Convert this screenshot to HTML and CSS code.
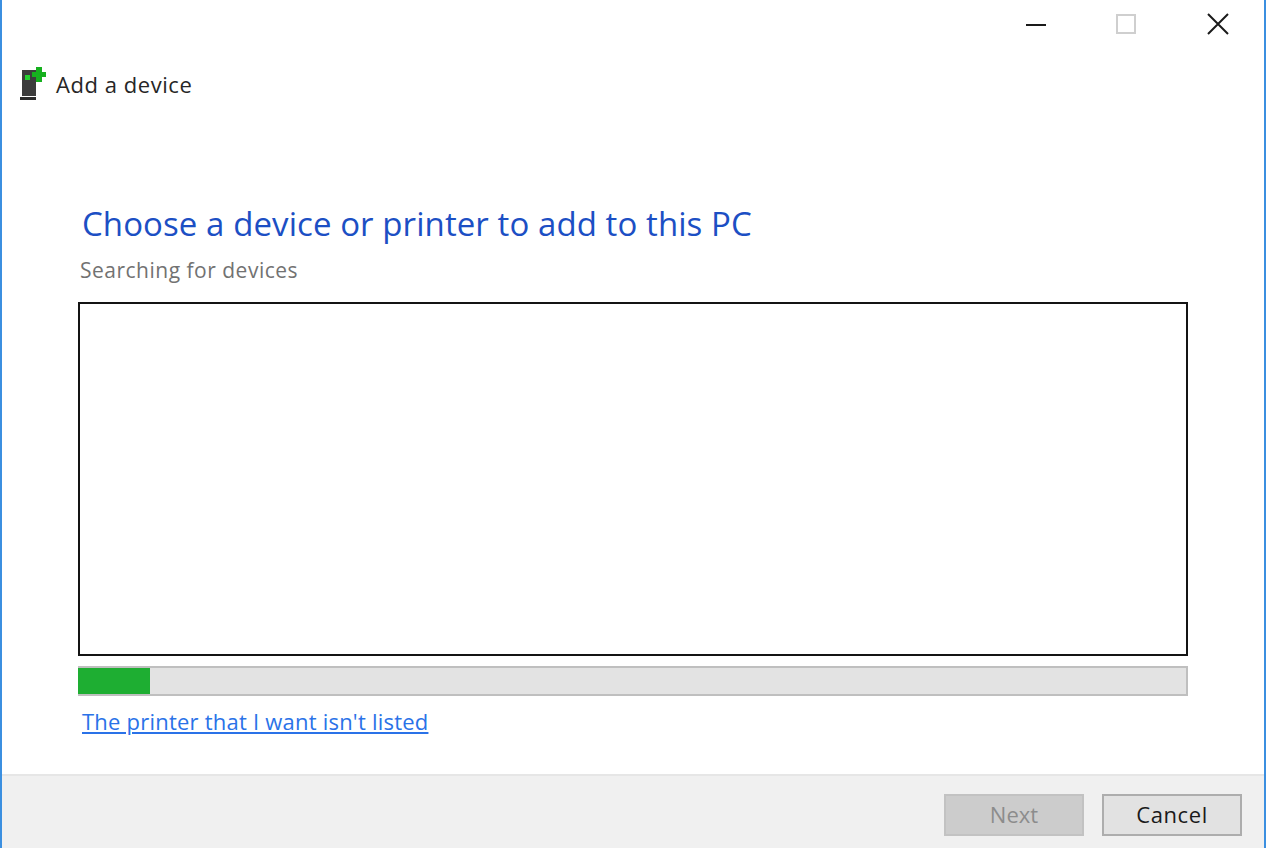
FILE: index.html
```html
<!DOCTYPE html>
<html lang="en">
<head>
<meta charset="utf-8">
<title>Add a device</title>
<link rel="stylesheet" href="styles.css">
</head>
<body>
<div class="window">
  <div class="controls">
    <svg class="ctl" width="22" height="22" viewBox="0 0 22 22"><path d="M1 12h20" stroke="#1a1a1a" stroke-width="2" fill="none"/></svg>
    <svg class="ctl" width="22" height="22" viewBox="0 0 22 22"><rect x="1" y="2" width="18" height="18" stroke="#cfcfcf" stroke-width="2" fill="none"/></svg>
    <svg class="ctl" width="22" height="22" viewBox="0 0 22 22"><path d="M1 1l20 20M21 1L1 21" stroke="#1a1a1a" stroke-width="2" fill="none"/></svg>
  </div>
  <div class="apphead">
    <svg class="appicon" width="28" height="34" viewBox="0 0 28 34">
      <rect x="4" y="3" width="14" height="26" fill="#3c3c3c"/>
      <rect x="7" y="8" width="5" height="5" fill="#25d030"/>
      <rect x="2" y="30" width="16" height="3" fill="#2c2c2c"/>
      <path d="M18 0h6v5h4v5h-4v5h-6v-5h-4V5h4z" fill="#16b01e"/>
    </svg>
    <span class="apptitle">Add a device</span>
  </div>
  <main class="content">
    <h1 class="heading">Choose a device or printer to add to this PC</h1>
    <p class="status">Searching for devices</p>
    <div class="listbox"></div>
    <div class="progress"><div class="bar"></div></div>
    <a class="link" href="#">The printer that I want isn't listed</a>
  </main>
  <footer class="footer">
    <button class="btn btn-off" disabled>Next</button>
    <button class="btn">Cancel</button>
  </footer>
</div>
</body>
</html>
```

FILE: styles.css
```css
* { box-sizing: border-box; }
html, body { margin: 0; height: 100%; overflow: hidden; }
body { background: #fff; font-family: "Open Sans", "Noto Sans", sans-serif; }
.window {
  width: 1266px;
  height: 848px;
  display: flex;
  flex-direction: column;
  border-left: 2px solid #3b8fe0;
  border-right: 2px solid #3b8fe0;
  background: #fff;
}
.controls {
  display: flex;
  justify-content: flex-end;
  gap: 69px;
  padding: 13px 35px 0 0;
  height: 66px;
}
.ctl { display: block; }
.apphead {
  display: flex;
  align-items: center;
  gap: 10px;
  padding-left: 16px;
  height: 36px;
}
.apptitle { font-size: 22px; color: #262626; letter-spacing: 0.55px; }
.content {
  flex: 1;
  display: flex;
  flex-direction: column;
  padding: 0 76px;
}
.heading {
  margin: 100px 0 0 4px;
  font-size: 33px;
  line-height: 44px;
  font-weight: 400;
  color: #1c4fc4;
  letter-spacing: 0.08px;
}
.status {
  margin: 10px 0 0 2px;
  font-size: 21px;
  line-height: 28px;
  color: #727272;
  letter-spacing: 0.5px;
}
.listbox {
  margin-top: 18px;
  height: 354px;
  border: 2px solid #141414;
  background: #fff;
}
.progress {
  margin-top: 10px;
  height: 30px;
  border: 2px solid #bfbfbf;
  border-left: 0;
  background: #e3e3e3;
}
.bar { width: 72px; height: 26px; background: #1eae32; }
.link {
  margin: 10px 0 0 4px;
  align-self: flex-start;
  font-size: 22px;
  line-height: 30px;
  color: #2a72e8;
  letter-spacing: 0.22px;
}
.footer {
  height: 74px;
  display: flex;
  justify-content: flex-end;
  gap: 18px;
  padding: 18px 22px 0 0;
  background: #f0f0f0;
  border-top: 2px solid #e6e6e6;
}
.btn {
  width: 140px;
  height: 42px;
  font: 22px "Open Sans", "Noto Sans", sans-serif;
  letter-spacing: 0.6px;
  color: #1a1a1a;
  background: #e2e2e2;
  border: 2px solid #adadad;
  padding: 0 0 2px;
}
.btn-off { background: #ccc; border-color: #c2c2c2; color: #8c8c8c; letter-spacing: 0; }
```
